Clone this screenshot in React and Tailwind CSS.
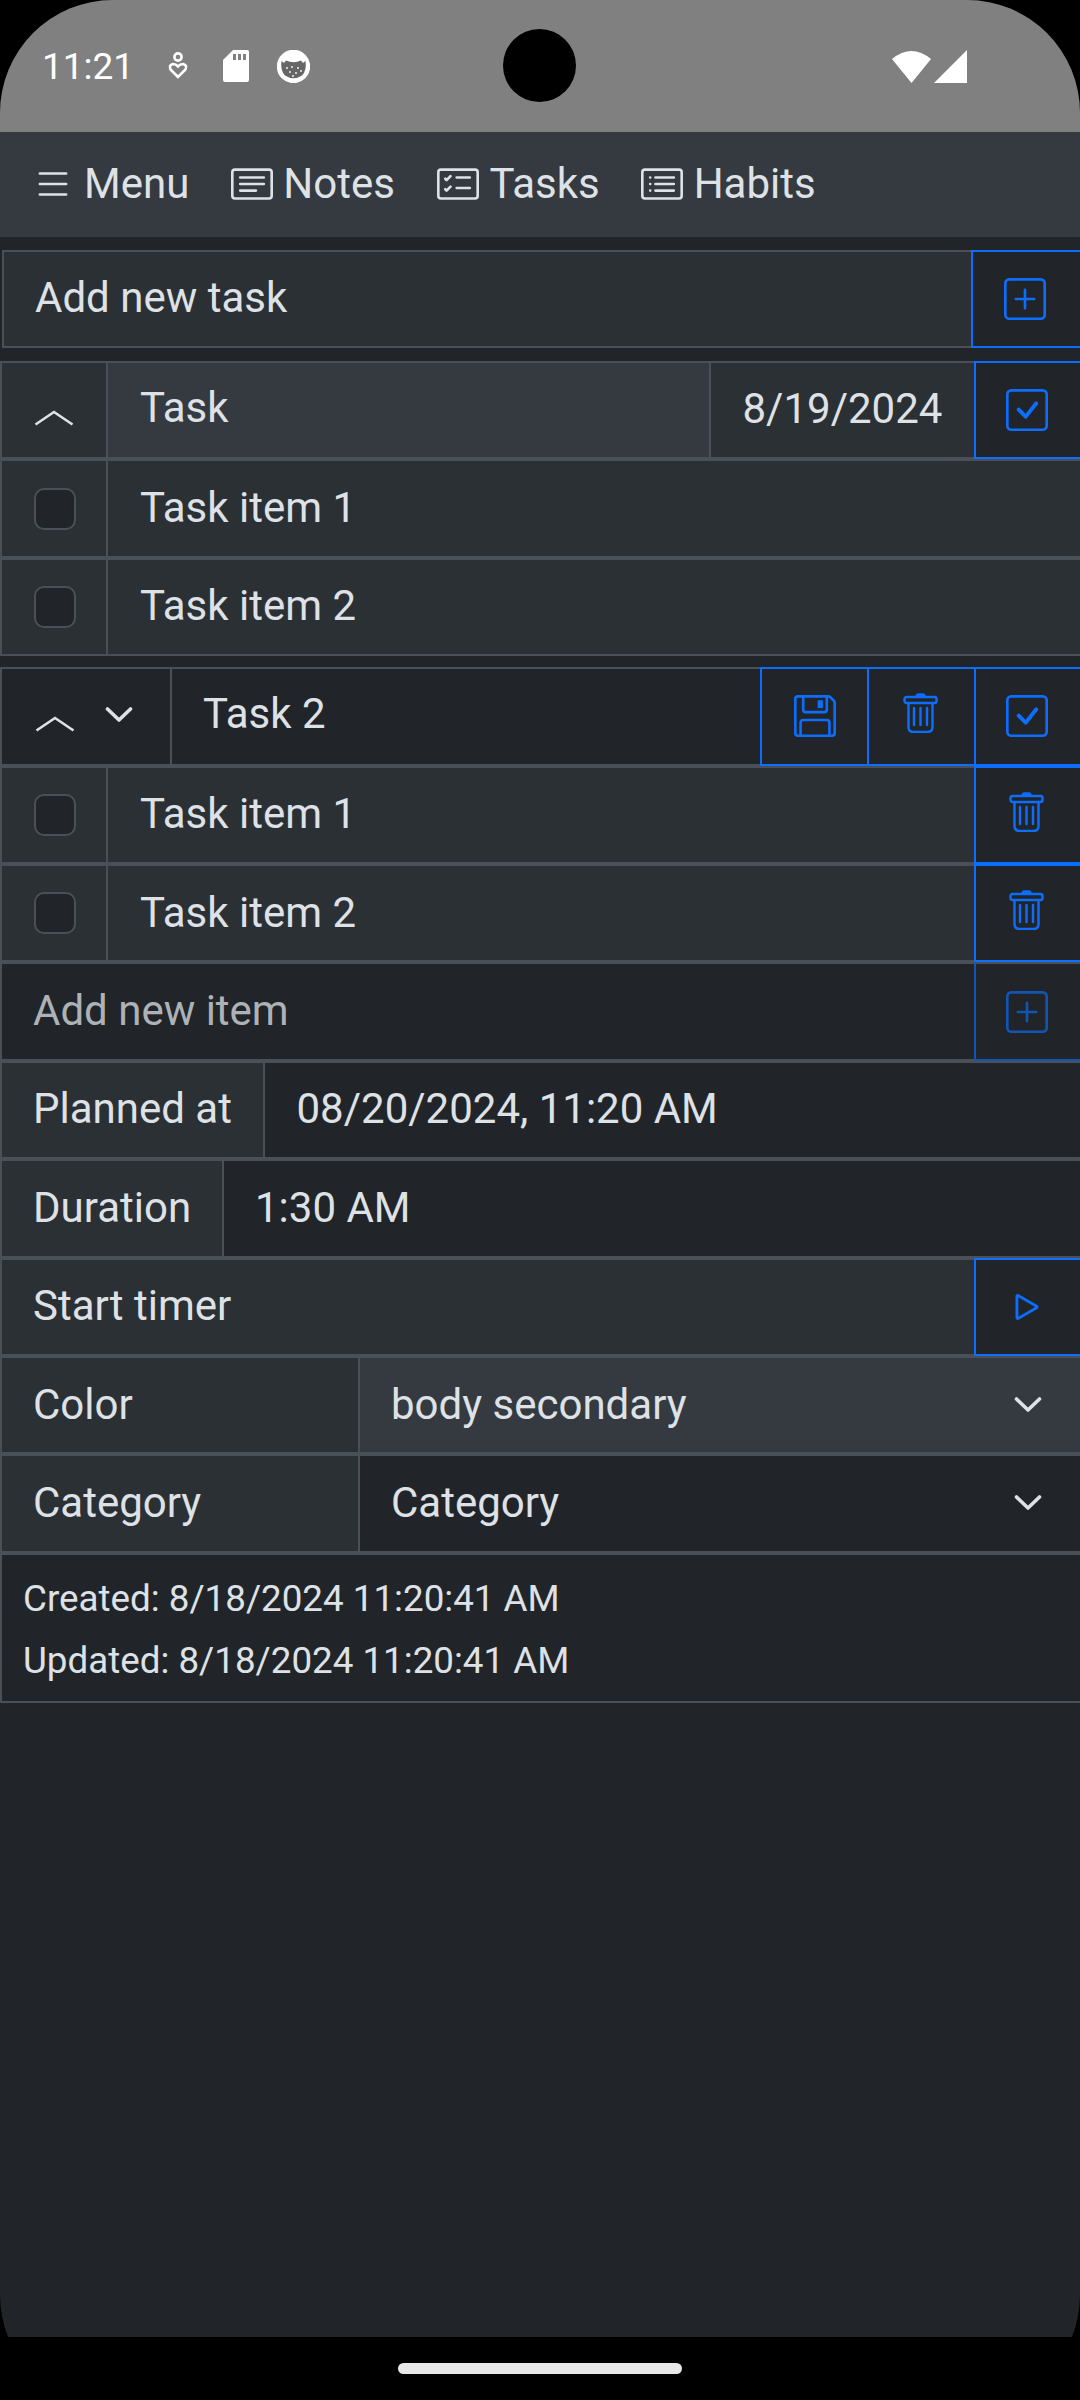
import React from "react";
import { BsList, BsCardText, BsCardChecklist, BsCardList, BsPlusSquare, BsCheckSquare, BsFloppy, BsPlay } from "react-icons/bs";

const Trash = () => (
  <svg className="-translate-y-[3px]" width="35" height="40" viewBox="0 0 35 40" fill="none" stroke="currentColor" strokeWidth="2.4" strokeLinecap="round" strokeLinejoin="round">
    <path d="M13.5 3.5 Q13.5 1.5 15.5 1.5 H19.5 Q21.5 1.5 21.5 3.5" fill="currentColor" />
    <rect x="1.5" y="4" width="32" height="6" rx="2" />
    <path d="M5.5 10 V34 Q5.5 39 10.5 39 H24.5 Q29.5 39 29.5 34 V10" />
    <path d="M11 15 V32 M17.5 15 V32 M24 15 V32" />
  </svg>
);

const ChevUp = () => (
  <svg width="40" height="16" viewBox="0 0 40 16" fill="none" stroke="#dee2e6" strokeWidth="2.6">
    <path d="M1.5 14.5 L20 2 L38.5 14.5" />
  </svg>
);

const SelectChev = () => (
  <svg width="28" height="17" viewBox="0 0 28 17" fill="none" stroke="#dee2e6" strokeWidth="3.6" strokeLinecap="round" strokeLinejoin="round">
    <path d="M2.5 3 L14 14 L25.5 3" />
  </svg>
);

const NavItem = ({ icon, label, className }) => (
  <div className={"flex items-center " + className}>
    {icon}
    <span>{label}</span>
  </div>
);

const Row = ({ children, className = "" }) => (
  <div className={"flex h-[98.4px] border-y-2 border-l-2 border-[#495057] " + className}>{children}</div>
);

const Cell = ({ children, className = "" }) => (
  <div className={"flex items-center whitespace-nowrap " + className}>{children}</div>
);

const Blue = ({ children, className = "border-2 -my-[2px] border-[#0d6efd] text-[#0d6efd]", w = "w-[106px]", pad = "pr-[3px]" }) => (
  <div className={"relative flex items-center justify-center border-r-0 bg-[#212529] shrink-0 " + pad + " " + w + " " + className}>{children}</div>
);

const CheckBox = () => (
  <div className="w-[106px] shrink-0 flex items-center justify-center pl-[2px] border-r-2 border-[#495057]">
    <div className="w-[42px] h-[42px] rounded-[10px] border-2 border-[#495057] bg-[#212529]" />
  </div>
);

const ItemRow = ({ text, trash }) => (
  <Row className="bg-[#2b3035]">
    <CheckBox />
    <Cell className="flex-1 pl-[32px] pb-[2px]">{text}</Cell>
    {trash && <Blue><Trash /></Blue>}
  </Row>
);

const Label = ({ children, className = "" }) => (
  <div className={"flex items-center pl-[31px] pb-[2px] bg-[#2b3035] border-r-2 border-[#495057] shrink-0 " + className}>{children}</div>
);

export default function App() {
  return (
    <div className="relative w-[1080px] h-[2400px] bg-black overflow-hidden text-[42px] text-[#dee2e6] font-['Roboto',sans-serif]">
      <div className="h-[2408px] rounded-[113px] bg-[#212529] overflow-hidden">
        <div className="relative h-[132px] bg-[#808080] flex items-center text-white">
          <span className="ml-[42px] mb-[-2px] text-[37px]">11:21</span>
          <svg className="ml-[34px]" width="20" height="28" viewBox="0 0 20 28" fill="none" stroke="white" strokeWidth="2.6">
            <circle cx="10" cy="5" r="3.6" />
            <path d="M10 25 L2.5 17.5 Q0.5 13 5 12 Q8 12 10 14.5 Q12 12 15 12 Q19.5 13 17.5 17.5 Z" />
          </svg>
          <svg className="ml-[35px]" width="26" height="32" viewBox="0 0 26 32">
            <path d="M10 0 H24 Q26 0 26 2 V30 Q26 32 24 32 H2 Q0 32 0 30 V10 Z" fill="white" />
            <path d="M10 4 H13 V10 H10 Z M15 4 H18 V10 H15 Z M20 4 H23 V10 H20 Z" fill="#808080" />
          </svg>
          <svg className="ml-[28px]" width="33" height="33" viewBox="0 0 33 33">
            <circle cx="16.5" cy="16.5" r="15.5" fill="white" />
            <path d="M4.5 11 L7 13 L9 10.5 Q16.5 14 24 10.5 L26 13 L28.5 11 Q30 20 25 25.5 Q16.5 31 8 25.5 Q3 20 4.5 11 Z" fill="#666666" />
            <circle cx="16.5" cy="16.5" r="15.5" fill="none" stroke="white" strokeWidth="2.4" />
            <g fill="white">
              <circle cx="10" cy="18" r="0.9" /><circle cx="15" cy="17" r="0.9" /><circle cx="21" cy="18" r="0.9" /><circle cx="13" cy="22" r="0.9" /><circle cx="19" cy="23" r="0.9" /><circle cx="24" cy="21" r="0.9" /><circle cx="16" cy="26" r="0.9" />
            </g>
          </svg>
          <svg className="ml-auto" width="39" height="33" viewBox="0 0 39 33">
            <path d="M0 9 Q19.5 -7 39 9 L19.5 33 Z" fill="white" />
          </svg>
          <svg className="ml-[3px] mr-[113px]" width="33" height="33" viewBox="0 0 33 33">
            <path d="M33 0 V33 H0 Z" fill="white" />
          </svg>
          <div className="absolute left-[503px] top-[29px] w-[73px] h-[73px] rounded-full bg-black" />
        </div>

        <div className="h-[105px] bg-[#343a40] flex items-center text-[42px] pb-[2px]">
          <NavItem className="ml-[38px] gap-[17px]" icon={<BsList size={42} className="-mx-[6.5px]" />} label="Menu" />
          <NavItem className="ml-[42px] gap-[10px]" icon={<BsCardText size={42} />} label="Notes" />
          <NavItem className="ml-[42.5px] gap-[10px]" icon={<BsCardChecklist size={42} />} label="Tasks" />
          <NavItem className="ml-[41px] gap-[11px]" icon={<BsCardList size={42} />} label="Habits" />
        </div>

        <div className="flex ml-[2px] mt-[13px] h-[98px] border-y-2 border-l-2 border-[#495057] bg-[#2b3035]">
          <Cell className="flex-1 pl-[31px] pb-[3px]">Add new task</Cell>
          <Blue w="w-[109px]"><BsPlusSquare size={42} /></Blue>
        </div>

        <div className="mt-[13px]">
          <Row>
            <div className="w-[106px] shrink-0 bg-[#2b3035] border-r-2 border-[#495057] flex justify-center pt-[47px]"><ChevUp /></div>
            <Cell className="w-[602.5px] pl-[32px] pb-[5px] bg-[#343a40] border-r-2 border-[#495057]">Task</Cell>
            <Cell className="flex-1 pl-[32px] pb-[3px] bg-[#2b3035]">8/19/2024</Cell>
            <Blue><BsCheckSquare size={42} /></Blue>
          </Row>
          <ItemRow text="Task item 1" />
          <ItemRow text="Task item 2" />
        </div>

        <div className="mt-[11px]">
          <Row>
            <div className="w-[170px] shrink-0 border-r-2 border-[#495057] relative">
              <div className="absolute left-[33px] top-[47px]"><ChevUp /></div>
              <div className="absolute left-[103px] top-[37px]"><SelectChev /></div>
            </div>
            <Cell className="flex-1 pl-[31px] pb-[6px]">Task 2</Cell>
            <Blue w="w-[107px]" pad="pr-0"><BsFloppy size={42} /></Blue>
            <Blue w="w-[107px]"><Trash /></Blue>
            <Blue><BsCheckSquare size={42} /></Blue>
          </Row>
          <ItemRow text="Task item 1" trash />
          <ItemRow text="Task item 2" trash />
          <Row>
            <Cell className="flex-1 pl-[31px] pb-[2px] text-[#dee2e6bf]">Add new item</Cell>
            <Blue className="-mb-[2px] border-l-2 border-b-2 border-[#0d6efda6] text-[#0d6efda6]"><BsPlusSquare size={42} /></Blue>
          </Row>
          <Row>
            <Label className="w-[262.5px]">Planned at</Label>
            <Cell className="flex-1 pl-[32px] pb-[2px]">08/20/2024, 11:20 AM</Cell>
          </Row>
          <Row>
            <Label className="w-[222px]">Duration</Label>
            <Cell className="flex-1 pl-[31px] pb-[2px]">1:30 AM</Cell>
          </Row>
          <Row className="bg-[#2b3035]">
            <Cell className="flex-1 pl-[31px] pb-[2px]">Start timer</Cell>
            <Blue><BsPlay size={46} /></Blue>
          </Row>
          <Row>
            <Label className="w-[358px]">Color</Label>
            <Cell className="flex-1 pl-[31px] pb-[2px] bg-[#343a40] justify-between pr-[38px]">body secondary<SelectChev /></Cell>
          </Row>
          <Row>
            <Label className="w-[358px]">Category</Label>
            <Cell className="flex-1 pl-[31px] pb-[2px] justify-between pr-[38px]">Category<SelectChev /></Cell>
          </Row>
          <div className="h-[150px] border-y-2 border-l-2 border-[#495057] pl-[21px] pt-[13px] text-[36.75px] leading-[62px]">
            <div>Created: 8/18/2024 11:20:41 AM</div>
            <div>Updated: 8/18/2024 11:20:41 AM</div>
          </div>
        </div>
      </div>

      <div className="absolute left-0 right-0 top-[2337px] h-[63px] bg-black flex justify-center pt-[26px]">
        <div className="w-[284px] h-[11px] rounded-full bg-[#e8e8e8]" />
      </div>
    </div>
  );
}
